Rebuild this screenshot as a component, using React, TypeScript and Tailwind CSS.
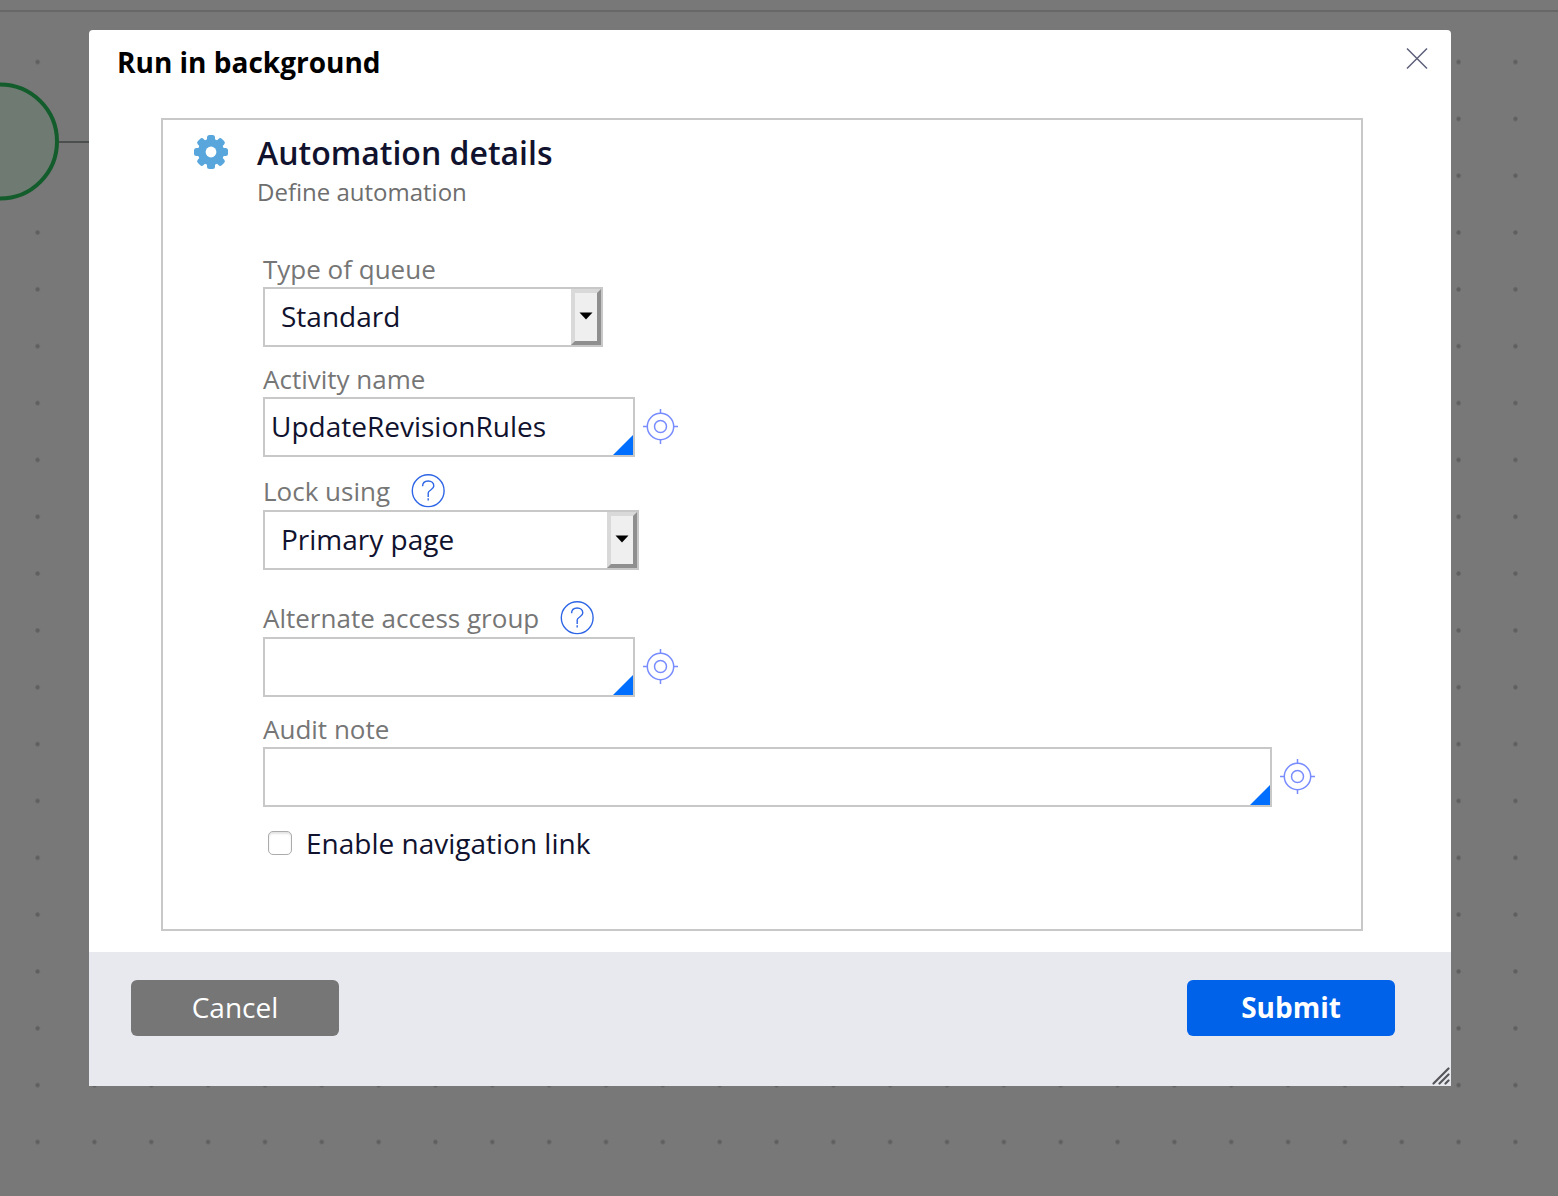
import React, { useState } from 'react';

const TargetIcon: React.FC = () => (
  <svg viewBox="0 0 36 36" className="h-9 w-9" fill="none" stroke="#788cff" strokeWidth="1.5">
    <circle cx="17.5" cy="17.5" r="13.2" />
    <circle cx="17.5" cy="17.5" r="6" />
    <path d="M17.5 0v4.5M17.5 30.5V35M0 17.5h4.5M30.5 17.5H35" />
  </svg>
);

const GearIcon: React.FC = () => (
  <svg viewBox="0 0 36 36" className="h-9 w-9" aria-hidden="true">
    <g fill="#58a6dc">
      {[0, 45, 90, 135].map((angle) => (
        <rect key={angle} x="14" y="1" width="8" height="34" rx="2.5" transform={`rotate(${angle} 18 18)`} />
      ))}
      <circle cx="18" cy="18" r="13.2" />
    </g>
    <circle cx="18" cy="18" r="5.4" fill="#fff" />
  </svg>
);

const HelpButton: React.FC<{ topic: string }> = ({ topic }) => (
  <button type="button" aria-label={`Help for ${topic}`} className="h-[34px] w-[34px] self-start">
    <svg viewBox="0 0 34 34" className="h-[34px] w-[34px] overflow-visible" fill="none" stroke="#2e66e6" strokeWidth="1.4">
      <circle cx="17.2" cy="15.7" r="15.9" />
      <path d="M11.6 11.3c0-3.3 2.4-5.3 5.6-5.3s5.6 2 5.6 5c0 3.6-5.6 4.2-5.6 7v4" />
      <path d="M17.2 23.3v2.2" />
    </svg>
  </button>
);

interface LabelRowProps {
  id: string;
  text: string;
  help?: boolean;
}

const LabelRow: React.FC<LabelRowProps> = ({ id, text, help }) => (
  <div className={help ? 'flex h-[35px] items-center gap-[21px]' : 'flex'}>
    <label htmlFor={id} className="pb-1 text-[26px] leading-7 text-[#767676]">
      {text}
    </label>
    {help && <HelpButton topic={text} />}
  </div>
);

interface SelectFieldProps extends LabelRowProps {
  options: string[];
  width: string;
}

const SelectField: React.FC<SelectFieldProps> = ({ id, text, help, options, width }) => (
  <div>
    <LabelRow id={id} text={text} help={help} />
    <div className={`relative ${width}`}>
      <select
        id={id}
        className="block h-[60px] w-full appearance-none border-2 border-[#c8c8c8] bg-white pb-0.5 pl-4 pr-10 text-[28px] text-[#10122e]"
      >
        {options.map((option) => (
          <option key={option}>{option}</option>
        ))}
      </select>
      <span className="pointer-events-none absolute inset-y-0.5 right-0.5 flex w-[30px] items-center justify-center border-4 border-b-[#8f8f8f] border-l-[#d9d9d9] border-r-[#8f8f8f] border-t-[#d9d9d9] bg-[#efefef] pb-0.5">
        <svg viewBox="0 0 14 8" className="h-2 w-3.5" aria-hidden="true">
          <path d="M0.5 0.5h13L7 7.5z" fill="#000" />
        </svg>
      </span>
    </div>
  </div>
);

interface TextFieldProps extends LabelRowProps {
  initial?: string;
  width: string;
}

const TextField: React.FC<TextFieldProps> = ({ id, text, help, initial = '', width }) => {
  const [value, setValue] = useState(initial);

  return (
    <div>
      <LabelRow id={id} text={text} help={help} />
      <div className="flex items-center gap-2">
        <div className={`relative ${width}`}>
          <input
            id={id}
            type="text"
            value={value}
            onChange={(e) => setValue(e.target.value)}
            className="block h-[60px] w-full border-2 border-[#c8c8c8] bg-white px-1.5 pb-0.5 text-[28px] text-[#10122e]"
          />
          <svg
            viewBox="0 0 20 20"
            className="pointer-events-none absolute bottom-0.5 right-0.5 h-5 w-5"
            aria-hidden="true"
          >
            <path d="M20 0v20H0z" fill="#006eff" />
          </svg>
        </div>
        <button type="button" aria-label={`Open ${text}`} className="shrink-0">
          <TargetIcon />
        </button>
      </div>
    </div>
  );
};

const FlowCanvas: React.FC = () => (
  <svg className="absolute inset-0 h-full w-full" aria-hidden="true">
    <defs>
      <pattern id="dots" x="9.2" y="33.6" width="56.84" height="56.84" patternUnits="userSpaceOnUse">
        <circle cx="28.4" cy="28.4" r="2.2" fill="#5f5f5f" />
      </pattern>
    </defs>
    <rect y="12" width="100%" height="100%" fill="url(#dots)" />
    <rect y="10" width="100%" height="2" fill="#676767" />
    <path d="M58 142h60" stroke="#4b4f4e" strokeWidth="2" />
    <circle cx="0" cy="141.5" r="57" fill="#6f7b72" stroke="#135c2c" strokeWidth="4" />
  </svg>
);

export default function App() {
  const [navLink, setNavLink] = useState(false);

  return (
    <div className="relative min-h-screen bg-[#787878] pb-[110px] pl-[89px] pr-[107px] pt-[30px] font-['Open_Sans',sans-serif]">
      <FlowCanvas />
      <form
        role="dialog"
        aria-labelledby="dialog-title"
        onSubmit={(e) => e.preventDefault()}
        className="relative rounded-t bg-white"
      >
        <header className="flex h-[88px] items-start justify-between pl-7 pr-[22px] pt-3">
          <h1 id="dialog-title" className="text-[28px] font-bold leading-10 text-black">
            Run in background
          </h1>
          <button type="button" aria-label="Close" className="pt-1">
            <svg viewBox="0 0 20 20" className="m-0.5 h-5 w-5 overflow-visible" stroke="#5c5f78" strokeWidth="1.5">
              <path d="M0 0.5l20 20M20 0.5L0 20.5" />
            </svg>
          </button>
        </header>

        <section className="ml-[72px] mr-[88px] border-2 border-[#c8c8c8] pb-[68px]">
          <div className="flex gap-7 pl-[30px] pt-3.5">
            <GearIcon />
            <div>
              <h2 className="text-[32px] font-semibold leading-[38px] text-[#10122e]">Automation details</h2>
              <p className="text-2xl leading-10 text-[#6e6e6e]">Define automation</p>
            </div>
          </div>

          <div className="flex flex-col gap-[18px] pl-[100px] pr-[45px] pt-[43px]">
            <SelectField
              id="queue-type"
              text="Type of queue"
              options={['Standard', 'Dedicated']}
              width="w-[340px]"
            />
            <TextField id="activity-name" text="Activity name" initial="UpdateRevisionRules" width="w-[372px]" />
            <SelectField
              id="lock-using"
              text="Lock using"
              help
              options={['Primary page', 'Key defined']}
              width="w-[376px]"
            />
            <div className="pt-3.5">
              <TextField id="access-group" text="Alternate access group" help width="w-[372px]" />
            </div>
            <TextField id="audit-note" text="Audit note" width="flex-1" />
            <label className="flex items-center gap-3.5 pl-[5px] text-[28px] leading-9 text-[#10122e]">
              <input
                type="checkbox"
                checked={navLink}
                onChange={(e) => setNavLink(e.target.checked)}
                className="h-6 w-6 appearance-none rounded-[5px] border border-[#ababab] bg-white shadow-[inset_0_2px_2px_#e4e4e4] checked:bg-[#006eff]"
              />
              Enable navigation link
            </label>
          </div>
        </section>

        <footer className="relative mt-[21px] flex items-start justify-between bg-[#e8e9ee] pb-[50px] pl-[42px] pr-14 pt-7">
          <button type="button" className="h-14 w-52 rounded-md bg-[#767676] pb-0.5 text-[28px] text-white">
            Cancel
          </button>
          <button type="submit" className="h-14 w-52 rounded-md bg-[#0062e8] pb-0.5 text-[28px] font-bold text-white">
            Submit
          </button>
          <svg
            viewBox="0 0 18 18"
            className="absolute bottom-px right-px h-[18px] w-[18px]"
            stroke="#55565a"
            strokeWidth="2.2"
            strokeLinecap="round"
            aria-hidden="true"
          >
            <path d="M1.5 16.5l15-15M7.5 16.5l9-9M13.5 16.5l3-3" />
          </svg>
        </footer>
      </form>
    </div>
  );
}
